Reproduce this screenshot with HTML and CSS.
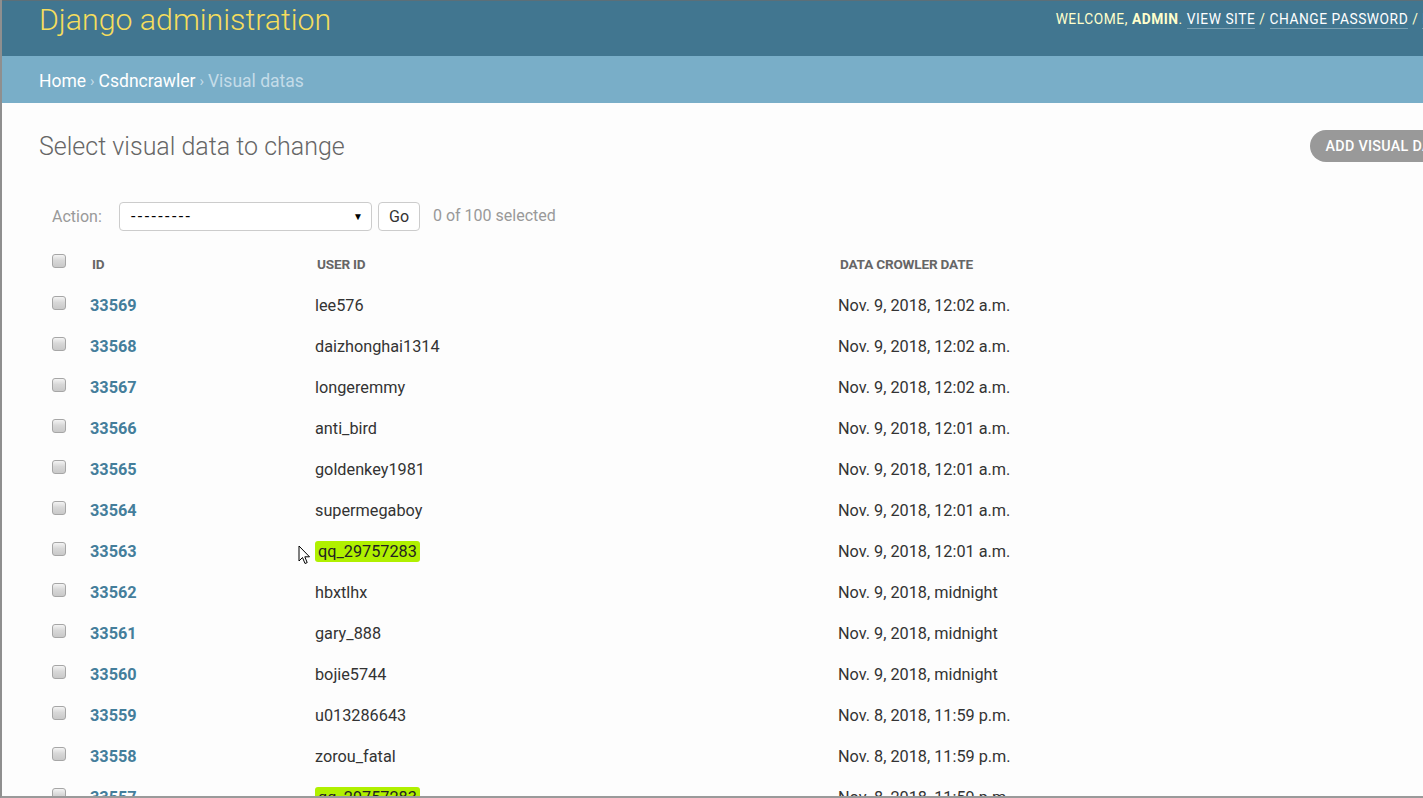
FILE: index.html
```html
<!DOCTYPE html>
<html>
<head>
<meta charset="utf-8">
<title>Select visual data to change | Django site admin</title>
<link rel="stylesheet" href="styles.css">
</head>
<body>
<div class="frame">
  <div class="page">
    <header class="header">
      <div class="branding">Django administration</div>
      <div class="user-tools">WELCOME, <strong>ADMIN</strong>. <a href="#">VIEW SITE</a> / <a href="#">CHANGE PASSWORD</a> / <a href="#">LOG OUT</a></div>
    </header>
    <nav class="breadcrumbs"><a href="#">Home</a><span class="sep">›</span><a href="#">Csdncrawler</a><span class="sep">›</span><span class="current">Visual datas</span></nav>
    <main class="content">
      <div class="title-row">
        <h1>Select visual data to change</h1>
        <a class="addlink" href="#">ADD VISUAL DATA</a>
      </div>
      <div class="actions">
        <label class="action-label">Action:</label>
        <div class="select"><span class="dashes">---------</span><span class="arrow">▼</span></div>
        <button class="go">Go</button>
        <span class="counter">0 of 100 selected</span>
      </div>
      <div class="results">
        <div class="row head">
          <span class="cb"></span><span class="th">ID</span><span class="th">USER ID</span><span class="th">DATA CROWLER DATE</span>
        </div>
        <div class="row"><span class="cb"></span><a class="id" href="#">33569</a><span class="td">lee576</span><span class="td">Nov. 9, 2018, 12:02 a.m.</span></div>
        <div class="row"><span class="cb"></span><a class="id" href="#">33568</a><span class="td">daizhonghai1314</span><span class="td">Nov. 9, 2018, 12:02 a.m.</span></div>
        <div class="row"><span class="cb"></span><a class="id" href="#">33567</a><span class="td">longeremmy</span><span class="td">Nov. 9, 2018, 12:02 a.m.</span></div>
        <div class="row"><span class="cb"></span><a class="id" href="#">33566</a><span class="td">anti_bird</span><span class="td">Nov. 9, 2018, 12:01 a.m.</span></div>
        <div class="row"><span class="cb"></span><a class="id" href="#">33565</a><span class="td">goldenkey1981</span><span class="td">Nov. 9, 2018, 12:01 a.m.</span></div>
        <div class="row"><span class="cb"></span><a class="id" href="#">33564</a><span class="td">supermegaboy</span><span class="td">Nov. 9, 2018, 12:01 a.m.</span></div>
        <div class="row"><span class="cb"></span><a class="id" href="#">33563</a><span class="td"><mark class="hl">qq_29757283</mark></span><span class="td">Nov. 9, 2018, 12:01 a.m.</span></div>
        <div class="row"><span class="cb"></span><a class="id" href="#">33562</a><span class="td">hbxtlhx</span><span class="td">Nov. 9, 2018, midnight</span></div>
        <div class="row"><span class="cb"></span><a class="id" href="#">33561</a><span class="td">gary_888</span><span class="td">Nov. 9, 2018, midnight</span></div>
        <div class="row"><span class="cb"></span><a class="id" href="#">33560</a><span class="td">bojie5744</span><span class="td">Nov. 9, 2018, midnight</span></div>
        <div class="row"><span class="cb"></span><a class="id" href="#">33559</a><span class="td">u013286643</span><span class="td">Nov. 8, 2018, 11:59 p.m.</span></div>
        <div class="row"><span class="cb"></span><a class="id" href="#">33558</a><span class="td">zorou_fatal</span><span class="td">Nov. 8, 2018, 11:59 p.m.</span></div>
        <div class="row"><span class="cb"></span><a class="id" href="#">33557</a><span class="td"><mark class="hl">qq_29757283</mark></span><span class="td">Nov. 8, 2018, 11:59 p.m.</span></div>
      </div>
    </main>
  </div>
  <svg class="cursor" width="13" height="21" viewBox="0 0 13 21"><path d="M1 1 L1 16 L4.5 12.5 L7 18.5 L9.2 17.6 L6.8 11.8 L11.5 11.8 Z" fill="#fff" stroke="#000" stroke-width="1" stroke-linejoin="miter"/></svg>
</div>
</body>
</html>
```
FILE: styles.css
```css
html, body {
  margin: 0;
  padding: 0;
  overflow: hidden;
  background: #fff;
}
body {
  font-family: Roboto, "Liberation Sans", sans-serif;
  color: #333;
}
a { text-decoration: none; }

.frame {
  position: relative;
  width: 1423px;
  height: 798px;
  box-sizing: border-box;
  border-left: 2px solid #8f8f8f;
  border-bottom: 2px solid #9a9a9a;
  overflow: hidden;
  background: #fdfdfd;
}
.page {
  width: 1520px;
}

.header {
  height: 56px;
  background: #417690;
  box-sizing: border-box;
  padding: 0 40px 0 37px;
  display: flex;
  justify-content: space-between;
  align-items: flex-start;
  border-top: 1px solid #5c6f78;
}
.branding {
  font-size: 30.3px;
  font-weight: 300;
  line-height: 38px;
  color: #f5dd5d;
}
.user-tools {
  font-size: 13.75px;
  line-height: 18px;
  padding-top: 9px;
  color: #ffc;
  letter-spacing: 0.55px;
  white-space: nowrap;
}
.user-tools strong { font-weight: 700; }
.user-tools a {
  color: #fff;
  border-bottom: 1px solid rgba(255,255,255,0.3);
  padding-bottom: 1px;
}

.breadcrumbs {
  height: 47px;
  background: #79aec8;
  box-sizing: border-box;
  padding: 3px 37px 0;
  display: flex;
  align-items: center;
  font-size: 17.5px;
  color: #c4dce8;
}
.breadcrumbs a { color: #fff; }
.breadcrumbs .sep { margin: 0 4px; font-size: 15px; color: #c4dce8; }
.breadcrumbs .current { color: #c4dce8; }

.content {
  padding: 0 57px 0 37px;
}
.title-row {
  display: flex;
  justify-content: space-between;
  align-items: center;
  height: 86px;
  padding-top: 1px;
  box-sizing: border-box;
}
.title-row h1 {
  margin: 0;
  font-size: 25px;
  font-weight: 300;
  color: #666;
  line-height: 30px;
}
.addlink {
  display: inline-flex;
  align-items: center;
  height: 32px;
  padding: 0 16px;
  border-radius: 16px;
  background: #999;
  color: #fff;
  font-size: 14.3px;
  font-weight: 500;
  letter-spacing: 0.3px;
  margin-top: -2px;
}

.actions {
  display: flex;
  align-items: center;
  height: 29px;
  margin-top: 13px;
  padding-left: 13px;
  font-size: 16px;
}
.action-label {
  color: #999;
  width: 67px;
}
.select {
  width: 253px;
  height: 29px;
  box-sizing: border-box;
  border: 1px solid #ccc;
  border-radius: 4px;
  background: #fff;
  display: flex;
  align-items: center;
  justify-content: space-between;
  padding: 0 8px 0 11px;
  color: #000;
  font-family: Roboto, sans-serif;
  font-size: 16px;
}
.select .dashes { letter-spacing: 2.4px; }
.select .arrow { font-size: 10px; }
.go {
  margin-left: 6px;
  height: 29px;
  width: 42px;
  box-sizing: border-box;
  border: 1px solid #ccc;
  border-radius: 4px;
  background: #fff;
  font-family: Roboto, sans-serif;
  font-size: 16px;
  color: #333;
  padding: 0;
}
.counter {
  margin-left: 13px;
  color: #999;
  line-height: 29px;
  margin-top: -2px;
}

.results { margin-top: 12px; }
.row {
  display: grid;
  grid-template-columns: 38px 225px 523px 1fr;
  height: 41px;
  align-items: center;
  padding-left: 13px;
  font-size: 16.25px;
}
.row.head { margin-bottom: 1px; }
.cb {
  width: 12px;
  height: 12px;
  border: 1px solid #a6a6a6;
  border-radius: 3px;
  background: linear-gradient(#f4f4f4 0%, #d8d8d8 45%, #c9c9c9 100%);
  margin-top: -6px;
}
.th {
  font-size: 13.6px;
  font-weight: 700;
  color: #666;
  padding-left: 2px;
  letter-spacing: -0.2px;
}
.id {
  color: #447e9b;
  font-weight: 700;
}
.td { color: #333; }
.hl {
  background: #b0f000;
  color: #222;
  border-radius: 3px;
  padding: 1px 3px;
}
.cursor {
  position: absolute;
  left: 296px;
  top: 545px;
}
```
